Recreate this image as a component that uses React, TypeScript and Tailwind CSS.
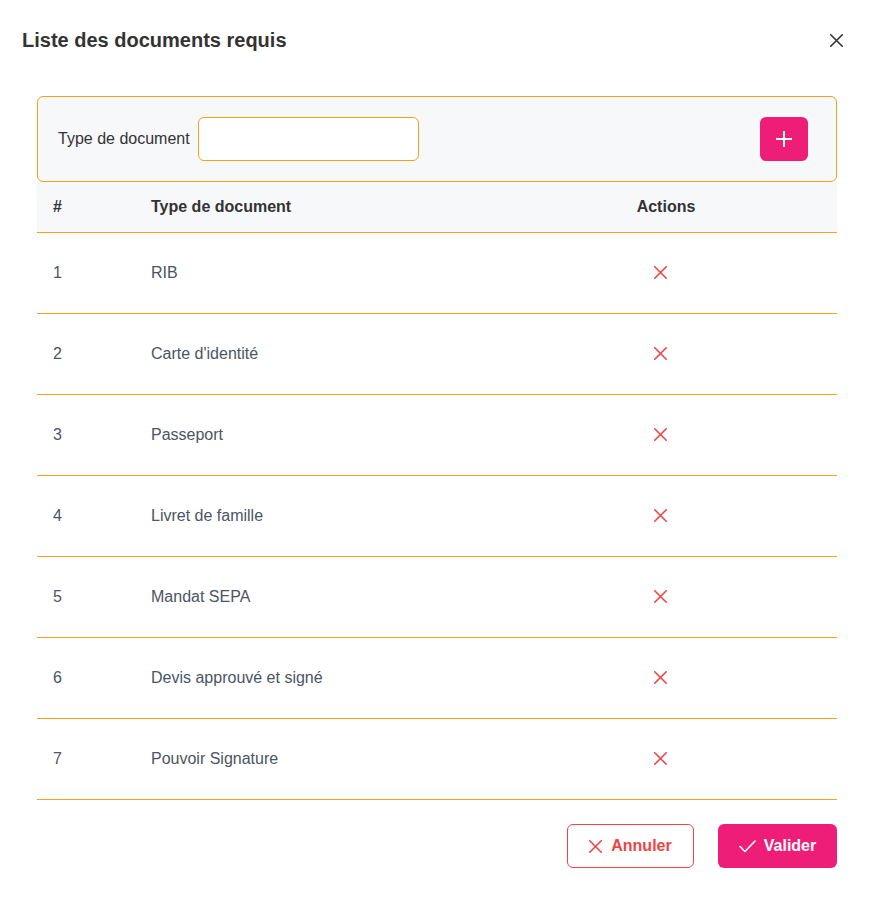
const documents = [
  "RIB",
  "Carte d'identité",
  "Passeport",
  "Livret de famille",
  "Mandat SEPA",
  "Devis approuvé et signé",
  "Pouvoir Signature",
];

function Cross({ className }: { className?: string }) {
  return (
    <svg width="13" height="13" viewBox="0 0 13 13" fill="none" className={className}>
      <path d="M0.75 0.75L12.25 12.25M12.25 0.75L0.75 12.25" stroke="currentColor" strokeWidth="1.6" strokeLinecap="round" />
    </svg>
  );
}

export default function App() {
  return (
    <div className="w-[875px] h-[916px] bg-white font-['Liberation_Sans',Arial,sans-serif] text-[#333]">
      <div className="flex items-center justify-between h-7 mt-[26px] pl-[22px] pr-[32px]">
        <h1 className="text-[20px] font-bold text-[#333]">Liste des documents requis</h1>
        <button className="text-[#333]">
          <Cross />
        </button>
      </div>

      <div className="pl-[37px] pr-[38px] pt-[42px]">
        <div className="flex items-center justify-between rounded-md border border-[#f5a11d] bg-[#f7f8fa] py-5 pl-5 pr-[28px]">
          <div className="flex items-center gap-2">
            <label className="text-[16px] text-[#333]">Type de document</label>
            <input className="h-11 w-[221px] rounded-md border border-[#f5a11d] bg-white px-3 outline-none" />
          </div>
          <button className="flex h-11 w-12 items-center justify-center rounded-md bg-[#ee1e78] text-white">
            <svg width="16" height="16" viewBox="0 0 16 16" fill="none">
              <path d="M8 0V16M0 8H16" stroke="currentColor" strokeWidth="2" />
            </svg>
          </button>
        </div>

        <div className="grid grid-cols-[98px_360px_1fr] h-[51px] items-center border-b border-[#f5a11d] bg-[#f7f8fa] text-[16px] font-bold text-[#333]">
          <div className="pl-4">#</div>
          <div className="pl-4">Type de document</div>
          <div className="text-center">Actions</div>
        </div>

        {documents.map((doc, i) => (
          <div
            key={doc}
            className="grid grid-cols-[98px_360px_1fr] h-[81px] items-center border-b border-[#f5a11d] text-[16px] text-[#4b5563]"
          >
            <div className="pl-4">{i + 1}</div>
            <div className="pl-4">{doc}</div>
            <div className="flex justify-center pr-3 pb-px">
              <button className="text-[#ef4444]">
                <Cross />
              </button>
            </div>
          </div>
        ))}

        <div className="flex justify-end gap-6 pt-6">
          <button className="flex h-11 w-[127px] items-center justify-center gap-[9px] rounded-md border border-[#ef4444] bg-white text-[16px] font-bold text-[#ef4444]">
            <Cross />
            Annuler
          </button>
          <button className="flex h-11 w-[119px] items-center justify-center gap-2 rounded-md bg-[#ee1e78] text-[16px] font-bold text-white">
            <svg width="17" height="13" viewBox="0 0 17 13" fill="none">
              <path d="M1 6.5L6 11.5L16 1" stroke="currentColor" strokeWidth="1.6" strokeLinecap="round" strokeLinejoin="round" />
            </svg>
            Valider
          </button>
        </div>
      </div>
    </div>
  );
}
